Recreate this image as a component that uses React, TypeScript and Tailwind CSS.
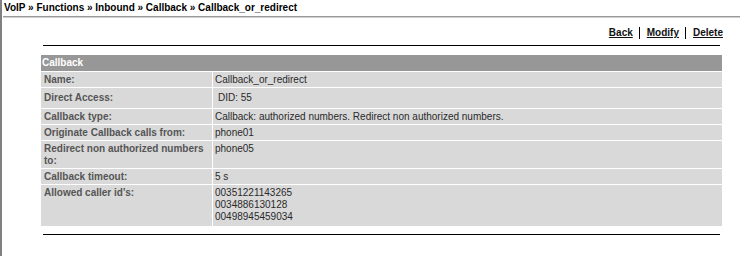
const rows: { label: string; value: React.ReactNode; kind?: 'did' | 'tall' }[] = [
  { label: 'Name:', value: 'Callback_or_redirect' },
  { label: 'Direct Access:', value: 'DID: 55', kind: 'did' },
  { label: 'Callback type:', value: 'Callback: authorized numbers. Redirect non authorized numbers.' },
  { label: 'Originate Callback calls from:', value: 'phone01' },
  { label: 'Redirect non authorized numbers to:', value: 'phone05' },
  { label: 'Callback timeout:', value: '5 s' },
  {
    label: "Allowed caller id's:",
    value: (
      <>
        00351221143265
        <br />
        0034886130128
        <br />
        00498945459034
      </>
    ),
    kind: 'tall',
  },
];

function Row({ label, value, kind }: (typeof rows)[number]) {
  if (kind === 'did') {
    return (
      <>
        <div className="bg-[#d9d9d9] h-[20px] flex items-center pl-[3px] pr-[2px] font-bold text-[#555]">{label}</div>
        <div className="bg-[#d9d9d9] h-[20px] flex items-center pl-[5px] text-[#2a2a2a]">{value}</div>
      </>
    );
  }
  return (
    <>
      <div className={`bg-[#d9d9d9] pt-[2px] pl-[3px] pr-[2px] font-bold text-[#555] ${kind === 'tall' ? 'pb-[3px]' : 'pb-px'}`}>
        {label}
      </div>
      <div className={`bg-[#d9d9d9] pt-[2px] pl-[2px] text-[#2a2a2a] ${kind === 'tall' ? 'pb-[3px]' : 'pb-px'}`}>{value}</div>
    </>
  );
}

export default function App() {
  return (
    <div className="w-[740px] h-[256px] bg-white border-l-2 border-[#808080] font-['Liberation_Sans',Arial,sans-serif] text-[10px] leading-[12px]">
      {/* breadcrumb */}
      <div className="h-[16px] pl-[2px] pt-[2px] font-bold text-black">
        VoIP » Functions » Inbound » Callback » Callback_or_redirect
      </div>
      <div className="ml-px h-[2px] border-t border-[#9a9a9a] bg-[#cfcfcf]" />

      <div className="ml-[39px] w-[681px]">
        {/* actions */}
        <div className="mt-[9px] -mr-px flex justify-end font-bold text-[#111]">
          <a href="#" className="underline pr-[6px] mr-[7px] border-r border-black">
            Back
          </a>
          <a href="#" className="underline pr-[6px] mr-[7px] border-r border-black">
            Modify
          </a>
          <a href="#" className="underline">
            Delete
          </a>
        </div>

        <div className="mt-[6px] mx-[2px] h-px bg-black" />

        {/* detail table */}
        <div className="mt-[9px] grid grid-cols-[171px_1fr] gap-px bg-white">
          <div className="col-span-2 h-[16px] bg-[#979797] pl-[1px] pt-[2px] font-bold text-white">Callback</div>
          {rows.map((r) => (
            <Row key={r.label} {...r} />
          ))}
        </div>

        <div className="mt-[8px] mx-[2px] h-px bg-black" />
      </div>
    </div>
  );
}
